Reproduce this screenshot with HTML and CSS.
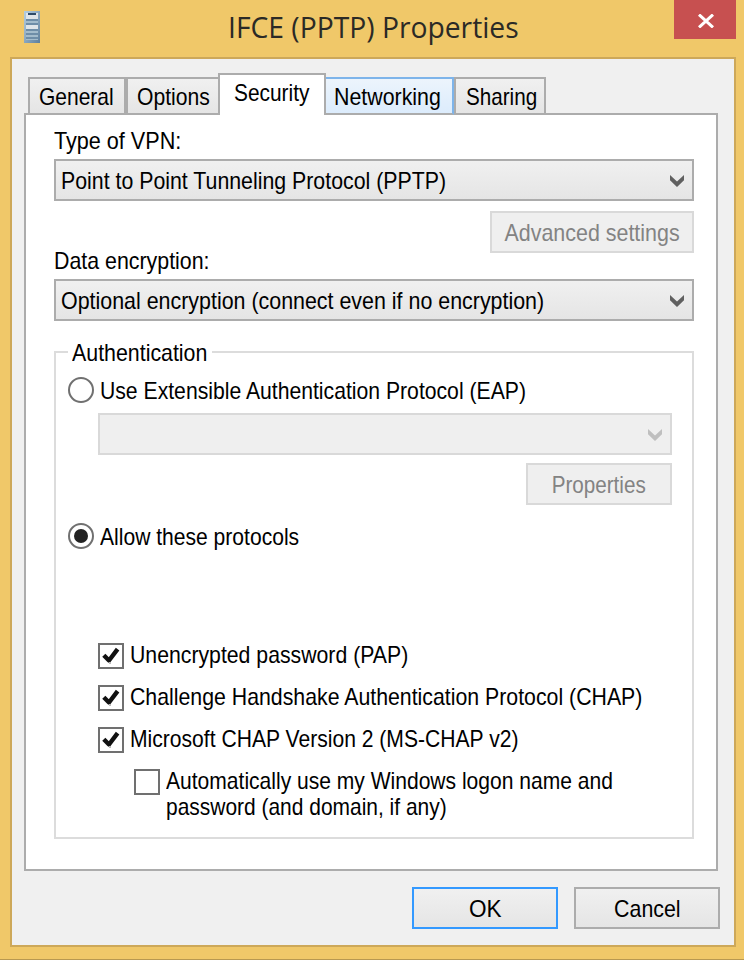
FILE: index.html
```
<!DOCTYPE html>
<html lang="en">
<head>
<meta charset="utf-8">
<title>IFCE (PPTP) Properties</title>
<link rel="stylesheet" href="styles.css">
</head>
<body>
<svg class="defs" width="0" height="0">
  <symbol id="chevron" viewBox="0 0 14 12"><path d="M0 0L7 6.6L14 0V5.2L7 12L0 5.2z"/></symbol>
  <symbol id="check" viewBox="0 0 22 22"><path d="M3.8 10.2L9 15.5L17.6 4.2" fill="none" stroke="#111" stroke-width="4.4" stroke-linejoin="round"/><path d="M10 17v2" stroke="#bbb" stroke-width="2"/></symbol>
</svg>
<div class="window">
  <header class="titlebar">
    <svg class="app-icon" width="16" height="32" viewBox="0 0 16 32" shape-rendering="crispEdges">
      <defs><linearGradient id="steel" x2="1" y2="1"><stop stop-color="#b5cfe2"/><stop offset="1" stop-color="#5d7f9d"/></linearGradient></defs>
      <path fill="url(#steel)" d="M0 0h16v32H0z"/>
      <path fill="#dfe5e9" d="M2 2h12v6H2zM2 14h12v4H2z"/>
      <path fill="#2f4b68" d="M4 2h8v2H4z"/>
      <path fill="#a3bccc" d="M2 10h12v2H2zM2 20h12v2H2zM2 24h12v2H2zM2 28h12v1H2z"/>
      <path fill="#6e8ea8" d="M2 8h12v2H2zM2 12h12v2H2zM2 18h12v2H2zM2 22h12v2H2zM2 26h12v2H2z"/>
    </svg>
    <h1 class="title"><span class="t t-title">IFCE (PPTP) Properties</span></h1>
    <button class="close" aria-label="Close"><svg width="16" height="14" viewBox="0 0 16 14"><path stroke="#fff" stroke-width="3" d="M1 .6L15 13.4M15 .6L1 13.4"/></svg></button>
  </header>
  <main class="client">
    <nav class="tabs">
      <div class="tab general"><span class="t t-general">General</span></div>
      <div class="tab options"><span class="t t-options">Options</span></div>
      <div class="tab security"><span class="t t-security">Security</span></div>
      <div class="tab networking"><span class="t t-networking">Networking</span></div>
      <div class="tab sharing"><span class="t t-sharing">Sharing</span></div>
    </nav>
    <section class="panel">
      <div class="label"><span class="t t-vpn">Type of VPN:</span></div>
      <div class="select"><span class="t t-point">Point to Point Tunneling Protocol (PPTP)</span><svg class="chevron"><use href="#chevron"/></svg></div>
      <div class="button disabled advanced"><span class="t t-advanced">Advanced settings</span></div>
      <div class="label second"><span class="t t-data">Data encryption:</span></div>
      <div class="select"><span class="t t-optional">Optional encryption (connect even if no encryption)</span><svg class="chevron"><use href="#chevron"/></svg></div>
      <div class="group">
        <div class="legend"><span class="t t-auth">Authentication</span></div>
        <div class="row radio-row"><i class="radio"></i><span class="t t-eap">Use Extensible Authentication Protocol (EAP)</span></div>
        <div class="select disabled"><svg class="chevron"><use href="#chevron"/></svg></div>
        <div class="button disabled properties"><span class="t t-properties">Properties</span></div>
        <div class="row radio-row allow"><i class="radio on"></i><span class="t t-allow">Allow these protocols</span></div>
        <div class="checks">
          <div class="row"><i class="box"><svg width="22" height="22"><use href="#check"/></svg></i><span class="t t-pap">Unencrypted password (PAP)</span></div>
          <div class="row"><i class="box"><svg width="22" height="22"><use href="#check"/></svg></i><span class="t t-chap">Challenge Handshake Authentication Protocol (CHAP)</span></div>
          <div class="row"><i class="box"><svg width="22" height="22"><use href="#check"/></svg></i><span class="t t-ms">Microsoft CHAP Version 2 (MS-CHAP v2)</span></div>
          <div class="row nested"><i class="box"></i><div class="lines"><span class="t t-auto">Automatically use my Windows logon name and</span><span class="t t-domain">password (and domain, if any)</span></div></div>
        </div>
      </div>
    </section>
    <footer class="actions">
      <div class="button primary"><span class="t t-ok">OK</span></div>
      <div class="button"><span class="t t-cancel">Cancel</span></div>
    </footer>
  </main>
</div>
</body>
</html>
```
FILE: styles.css
```
* { box-sizing: border-box; }
body { margin: 0; font: 24px/26px "Liberation Sans", sans-serif; color: #000; }
.defs { display: block; }
.window { height: 960px; padding: 0 8px 12px 10px; background: #f0c869; border-bottom: 1px solid #b89850; display: flex; flex-direction: column; }

/* Text is condensed horizontally; --fit is the width factor of each label */
.t { display: block; white-space: nowrap; transform: scaleX(var(--fit, .89)); transform-origin: 0 50%; }
.t-title { --fit: .942; }
.t-general { --fit: .875; }
.t-options { --fit: .88; }
.t-security { --fit: .87; }
.t-networking { --fit: .89; }
.t-sharing { --fit: .86; }
.t-vpn { --fit: .9; }
.t-point { --fit: .888; }
.t-advanced { --fit: .893; }
.t-data { --fit: .89; }
.t-optional { --fit: .892; }
.t-auth { --fit: .89; }
.t-eap { --fit: .882; }
.t-properties { --fit: .86; }
.t-allow { --fit: .878; }
.t-pap { --fit: .885; }
.t-chap { --fit: .887; }
.t-ms { --fit: .879; }
.t-auto { --fit: .877; }
.t-domain { --fit: .873; }
.t-ok { --fit: .94; }
.t-cancel { --fit: .89; }

.titlebar { height: 57px; flex: none; display: flex; align-items: flex-start; }
.app-icon { margin: 11px 0 0 14px; }
.title { flex: 1; margin: 6px 0 0 188px; font: 30px/42px "Open Sans", sans-serif; color: #2b2a26; }
.close { width: 62px; height: 39px; padding: 2px 0 0 2px; border: 0; background: #c75050; display: flex; align-items: center; justify-content: center; }

.client { flex: 1; border: 2px solid #cda859; background: #f0f0f0; padding: 14px 16px 0 12px; display: flex; flex-direction: column; }
.tabs { display: flex; align-items: flex-end; height: 42px; padding-left: 4px; position: relative; margin-bottom: -2px; }
.tab { height: 38px; border: 2px solid #acacac; background: linear-gradient(#f0f0f0, #e5e5e5); padding: 5px 0 0 9px; }
.general { width: 98px; }
.options { width: 94px; border-right: 0; }
.security { width: 108px; height: 42px; background: #fff; border-bottom: 0; padding: 5px 0 0 14px; margin-left: -2px; }
.networking { width: 128px; border-color: #7eb4ea; border-left: 0; border-bottom-color: #acacac; background: linear-gradient(#ecf4fc, #dcecfc); padding-left: 8px; }
.sharing { width: 92px; padding-left: 10px; }

.panel { height: 758px; flex: none; border: 2px solid #acacac; background: #fff; padding: 13px 22px 0 28px; }
.label { height: 31px; }
.select { height: 42px; border: 2px solid #acacac; background: linear-gradient(#f0f0f0, #e5e5e5); display: flex; align-items: center; padding: 1px 8px 0 5px; }
.chevron { width: 14px; height: 12px; margin: 13px 0 0 auto; align-self: flex-start; fill: #606060; }
.button { width: 146px; height: 42px; border: 2px solid #acacac; background: linear-gradient(#f0f0f0, #e5e5e5); display: flex; align-items: center; justify-content: center; padding-top: 1px; }
.button .t { transform-origin: 50% 50%; }
.button.disabled, .select.disabled { border-color: #d9d9d9; background: #efefef; color: #838383; }
.disabled .chevron { fill: #bfbfbf; }
.advanced { width: 204px; margin: 10px 0 0 auto; }
.label.second { margin-top: -5px; }
.button.primary { border-color: #3399ff; }

.group { height: 488px; margin-top: 30px; border: 2px solid #dcdcdc; padding: 0 20px 0 42px; }
.legend { width: 144px; height: 26px; margin: -13px 0 0 -30px; padding-left: 4px; background: #fff; }
.row { display: flex; align-items: center; height: 26px; }
.radio-row { margin: 11px 0 0 -30px; }
.radio-row .t { margin-top: 2px; }
.radio { width: 26px; height: 26px; flex: none; margin-right: 6px; border: 2px solid #707070; border-radius: 50%; display: flex; align-items: center; justify-content: center; }
.radio.on::after { content: ""; width: 14px; height: 14px; border-radius: 50%; background: #222; }
.group .select { margin-top: 10px; }
.properties { margin: 8px 0 0 auto; }
.allow { margin-top: 18px; }
.checks { margin-top: 94px; display: flex; flex-direction: column; gap: 16px; }
.checks .row > .t { margin-top: -2px; }
.box { width: 26px; height: 26px; flex: none; margin-right: 6px; border: 2px solid #707070; background: #fff; }
.box svg { display: block; }
.nested { margin-left: 36px; align-items: flex-start; }
.lines { margin-top: -1px; }

.actions { display: flex; justify-content: flex-end; gap: 16px; margin: 16px -2px 0 0; }
```
